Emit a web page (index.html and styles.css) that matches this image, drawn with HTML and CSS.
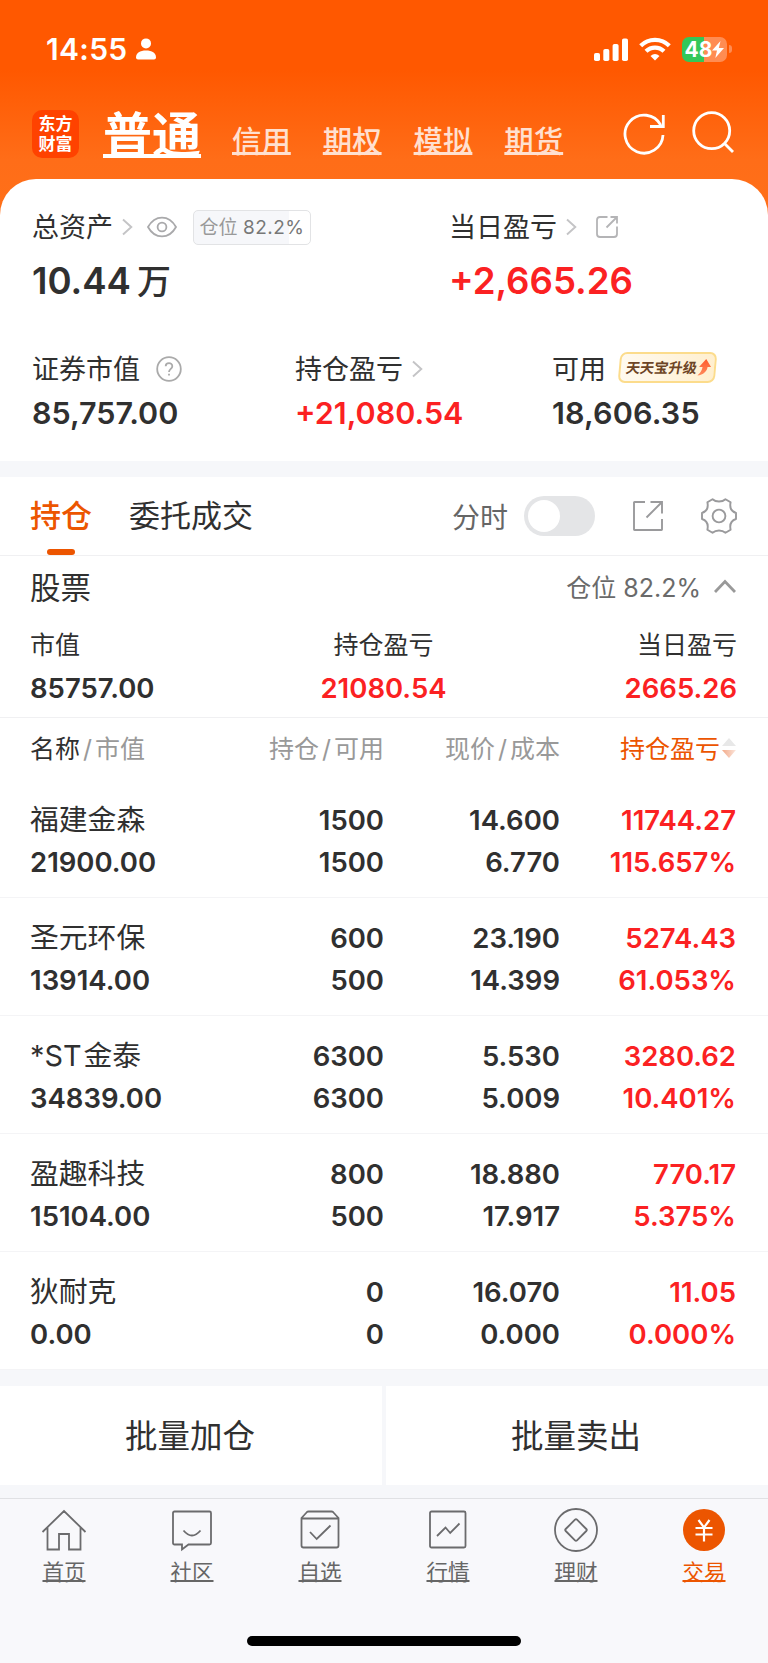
FILE: index.html
```html
<!DOCTYPE html>
<html lang="zh-CN">
<head>
    <meta charset="UTF-8">
    <meta name="viewport" content="width=device-width, initial-scale=1.0">
    <title>交易</title>
    <link rel="stylesheet" href="styles.css">
</head>
<body>
<div id="app">
    <header class="header">
        <div class="status">
            <span class="time">14:55</span>
            <svg class="person" width="20" height="22" viewBox="0 0 20 22" fill="#fff">
                <circle cx="10" cy="5.4" r="5"/>
                <path d="M0 19.5C0 15 4 12.6 10 12.6S20 15 20 19.5Q20 21.5 18 21.5H2Q0 21.5 0 19.5Z"/>
            </svg>
            <svg class="signal" width="34" height="23" viewBox="0 0 34 23" fill="#fff">
                <rect x="0" y="15" width="6" height="8" rx="1.8"/>
                <rect x="9.3" y="11" width="6" height="12" rx="1.8"/>
                <rect x="18.6" y="6" width="6" height="17" rx="1.8"/>
                <rect x="28" y="0.5" width="6" height="22.5" rx="1.8"/>
            </svg>
            <svg class="wifi" width="32" height="24" viewBox="0 0 32 24" fill="none" stroke="#fff" stroke-width="4.2">
                <path d="M1.7 8.8C9.5 .8 22.5 .8 30.3 8.8"/>
                <path d="M7 14.3C12 9.3 20 9.3 25 14.3"/>
                <path d="M16 23.5L11.5 19Q16 15 20.5 19Z" fill="#fff" stroke="none"/>
            </svg>
            <div class="battery">
                <span class="battery-num">48</span>
                <svg width="12" height="17" viewBox="0 0 12 17" fill="#fff">
                    <path d="M8.5 0L0 9.6H5L3.3 17L12 7H6.8Z"/>
                </svg>
            </div>
            <i class="battery-cap"></i>
        </div>
        <nav class="nav">
            <div class="logo"><span>东方</span><span>财富</span></div>
            <a class="nav-item active">普通</a>
            <a class="nav-item">信用</a>
            <a class="nav-item">期权</a>
            <a class="nav-item">模拟</a>
            <a class="nav-item">期货</a>
            <svg class="refresh" width="42" height="44" viewBox="0 0 42 44" fill="none" stroke="#fff" stroke-width="2.8">
                <path d="M40 23A19 19 0 1 1 37.8 13.2"/>
                <path d="M40.3 3V14.5H27"/>
            </svg>
            <svg class="search" width="42" height="44" viewBox="0 0 42 44" fill="none" stroke="#fff" stroke-width="2.8">
                <circle cx="19.7" cy="19.7" r="18"/>
                <path d="M32.5 32.5L41 41"/>
            </svg>
        </nav>
    </header>

    <section class="summary">
        <div class="row row-top">
            <div class="cell">
                <div class="label">
                    <span class="txt">总资产</span>
                    <svg class="arrow" width="11" height="18" viewBox="0 0 11 18"><path d="M1 1.5L9.3 9L1 16.5"/></svg>
                    <svg class="eye" width="30" height="22" viewBox="0 0 30 22" fill="none" stroke="#a9a9ab" stroke-width="1.8">
                        <path d="M1 11C8-1.6 22-1.6 29 11C22 23.6 8 23.6 1 11Z"/>
                        <circle cx="15" cy="11" r="4.4"/>
                    </svg>
                    <span class="ratio">仓位 <b>82.2%</b></span>
                </div>
                <div class="big">10.44<span class="wan">万</span></div>
            </div>
            <div class="cell">
                <div class="label">
                    <span class="txt">当日盈亏</span>
                    <svg class="arrow" width="11" height="18" viewBox="0 0 11 18"><path d="M1 1.5L9.3 9L1 16.5"/></svg>
                    <svg class="share-sm" width="22" height="22" viewBox="0 0 22 22" fill="none" stroke="#b4b4b6" stroke-width="1.8">
                        <path d="M11.5 1H4Q1 1 1 4V18Q1 21 4 21H18Q21 21 21 18V10.5"/>
                        <path d="M10.5 11.5L20.5 1.5M14.5 1H21V7.5"/>
                    </svg>
                </div>
                <div class="big red">+2,665.26</div>
            </div>
        </div>
        <div class="row row-sub">
            <div class="cell">
                <div class="label">
                    <span class="txt">证券市值</span>
                    <svg class="help" width="26" height="26" viewBox="0 0 26 26" fill="none" stroke="#aaa" stroke-width="1.8">
                        <circle cx="13" cy="13" r="11.8"/>
                        <path d="M9.7 10.3C9.7 6 16.3 6 16.3 10.2C16.3 12.8 13 12.9 13 16"/>
                        <path d="M13 17.7V19.6"/>
                    </svg>
                </div>
                <div class="mid">85,757.00</div>
            </div>
            <div class="cell">
                <div class="label">
                    <span class="txt">持仓盈亏</span>
                    <svg class="arrow" width="11" height="18" viewBox="0 0 11 18"><path d="M1 1.5L9.3 9L1 16.5"/></svg>
                </div>
                <div class="mid red">+21,080.54</div>
            </div>
            <div class="cell">
                <div class="label">
                    <span class="txt">可用</span>
                    <span class="promo">
                        <em>天天宝升级</em>
                        <svg width="13" height="17" viewBox="0 0 13 17">
                            <defs>
                                <linearGradient id="up" x1="0" y1="0" x2="0" y2="1">
                                    <stop offset="0" stop-color="#ff5a2c"/>
                                    <stop offset="1" stop-color="#ff8a5c"/>
                                </linearGradient>
                            </defs>
                            <path fill="url(#up)" d="M7.5 0L13 8H9.5C9.5 12 6 16 0 16.5C3 14 4.3 11 4.5 8H1Z"/>
                        </svg>
                    </span>
                </div>
                <div class="mid avail">18,606.35</div>
            </div>
        </div>
    </section>

    <section class="tabs">
        <span class="tab on">持仓</span>
        <span class="tab">委托成交</span>
        <span class="fenshi">分时</span>
        <span class="switch"></span>
        <svg class="share" width="32" height="32" viewBox="0 0 32 32" fill="none" stroke="#9a9a9c" stroke-width="1.9">
            <path d="M13 2H2.5Q2 2 2 2.5V29.5Q2 30 2.5 30H29.5Q30 30 30 29.5V19"/>
            <path d="M14.5 17.5L29.5 2.5M18.5 2H30V13.5"/>
        </svg>
        <svg class="gear" width="36" height="36" viewBox="0 0 36 36" fill="none" stroke="#9a9a9c" stroke-width="1.9" stroke-linejoin="round">
            <path d="M11.5 1.2C15 4.3 21 4.3 24.5 1.2L29.6 4.3C28.4 10 30 13.4 35 15V21C30 22.6 28.4 26 29.6 31.7L24.5 34.8C21 31.7 15 31.7 11.5 34.8L6.4 31.7C7.6 26 6 22.6 1 21V15C6 13.4 7.6 10 6.4 4.3Z"/>
            <circle cx="18" cy="18" r="6.4"/>
        </svg>
    </section>

    <section class="stock">
        <div class="stock-title">
            <span class="name">股票</span>
            <span class="pos">仓位 82.2%</span>
            <svg width="22" height="14" viewBox="0 0 22 14" fill="none" stroke="#999" stroke-width="2.8"><path d="M1 13L11 2.5L21 13"/></svg>
        </div>
        <div class="stock-sum">
            <div><p>市值</p><strong>85757.00</strong></div>
            <div><p>持仓盈亏</p><strong class="red">21080.54</strong></div>
            <div><p>当日盈亏</p><strong class="red">2665.26</strong></div>
        </div>
    </section>

    <section class="list">
        <div class="list-head">
            <span><b>名称</b><i>/</i>市值</span>
            <span>持仓<i>/</i>可用</span>
            <span>现价<i>/</i>成本</span>
            <span class="sort">持仓盈亏<svg width="16" height="22" viewBox="0 0 16 22">
                <defs>
                    <linearGradient id="fade" x1="0" x2="1" y1="0" y2="0">
                        <stop offset="0" stop-color="#f3a988"/>
                        <stop offset="1" stop-color="#fbe6dc"/>
                    </linearGradient>
                </defs>
                <path d="M8 1L15 9H1Z" fill="#e8e8e8"/>
                <path d="M8 21L15 13H1Z" fill="url(#fade)"/>
            </svg></span>
        </div>
        <ul>
            <li>
                <div><span class="name">福建金森</span><span>21900.00</span></div>
                <div><span>1500</span><span>1500</span></div>
                <div><span>14.600</span><span>6.770</span></div>
                <div class="red"><span>11744.27</span><span>115.657%</span></div>
            </li>
            <li>
                <div><span class="name">圣元环保</span><span>13914.00</span></div>
                <div><span>600</span><span>500</span></div>
                <div><span>23.190</span><span>14.399</span></div>
                <div class="red"><span>5274.43</span><span>61.053%</span></div>
            </li>
            <li>
                <div><span class="name">*ST<i class="thin"></i>金泰</span><span>34839.00</span></div>
                <div><span>6300</span><span>6300</span></div>
                <div><span>5.530</span><span>5.009</span></div>
                <div class="red"><span>3280.62</span><span>10.401%</span></div>
            </li>
            <li>
                <div><span class="name">盈趣科技</span><span>15104.00</span></div>
                <div><span>800</span><span>500</span></div>
                <div><span>18.880</span><span>17.917</span></div>
                <div class="red"><span>770.17</span><span>5.375%</span></div>
            </li>
            <li>
                <div><span class="name">狄耐克</span><span>0.00</span></div>
                <div><span>0</span><span>0</span></div>
                <div><span>16.070</span><span>0.000</span></div>
                <div class="red"><span>11.05</span><span>0.000%</span></div>
            </li>
        </ul>
    </section>

    <section class="batch">
        <div>批量加仓</div>
        <div>批量卖出</div>
    </section>

    <footer class="footer">
        <div class="menu">
            <a>
                <svg width="46" height="46" viewBox="0 0 46 46">
                    <path d="M1.5 25L23 4L44.5 25M6.5 20.5V42.5H18V27H28V42.5H39.5V20.5"/>
                </svg>
                <span>首页</span>
            </a>
            <a>
                <svg width="46" height="46" viewBox="0 0 46 46">
                    <path d="M5.5 4.5H40.5Q42 4.5 42 6V36Q42 37.5 40.5 37.5H19.5L13 42.5V37.5H5.5Q4 37.5 4 36V6Q4 4.5 5.5 4.5Z"/>
                    <path d="M14.5 23.5Q23 33.5 31.5 23.5"/>
                </svg>
                <span>社区</span>
            </a>
            <a>
                <svg width="46" height="46" viewBox="0 0 46 46">
                    <path d="M4.5 11L10 5Q10.5 4.5 11.5 4.5H34.5Q35.5 4.5 36 5L41.5 11V38.5Q41.5 40.5 39.5 40.5H6.5Q4.5 40.5 4.5 38.5ZM4.5 11.5H41.5"/>
                    <path d="M13 25L19.7 32L33.5 18.5"/>
                </svg>
                <span>自选</span>
            </a>
            <a>
                <svg width="46" height="46" viewBox="0 0 46 46">
                    <rect x="5" y="4.5" width="35.5" height="36" rx="1.5"/>
                    <path d="M12 29L20.5 20.5L25.2 26L34.5 16.5"/>
                </svg>
                <span>行情</span>
            </a>
            <a>
                <svg width="46" height="46" viewBox="0 0 46 46">
                    <circle cx="23" cy="23" r="21"/>
                    <path d="M22 12.7Q23 11.7 24 12.7L33.3 22Q34.3 23 33.3 24L24 33.3Q23 34.3 22 33.3L12.7 24Q11.7 23 12.7 22Z"/>
                </svg>
                <span>理财</span>
            </a>
            <a class="current">
                <svg width="46" height="46" viewBox="0 0 46 46">
                    <circle class="disc" cx="23" cy="23" r="21"/>
                    <path class="yen" d="M17.5 13L23 20.5L28.5 13M23 20.5V34.5M14.5 21H31.5M14.5 27.5H31.5"/>
                </svg>
                <span>交易</span>
            </a>
        </div>
        <div class="home-bar"></div>
    </footer>
</div>
</body>
</html>
```
FILE: styles.css
```css
* {
    margin: 0;
    padding: 0;
    box-sizing: border-box;
}

ul {
    list-style: none;
}

i, em {
    font-style: normal;
}

body {
    width: 768px;
    background: #fff;
    color: #303030;
    font-family: Inter, "Noto Sans CJK SC", sans-serif;
}

svg {
    display: block;
    flex-shrink: 0;
}

#app {
    height: 1663px;
    overflow: hidden;
    display: flex;
    flex-direction: column;
}

.red {
    color: #fb2122;
}

/* 顶部 */
.header {
    height: 219px;
    flex-shrink: 0;
    background: linear-gradient(#ff5800 0, #ff5800 70px, #ff6d18 160px, #ff7019 219px);
    color: #fff;
}

.status {
    height: 98px;
    padding: 0 36px 0 46px;
    display: flex;
    align-items: center;
}

.status .time {
    font-size: 30px;
    font-weight: 600;
    letter-spacing: 0.3px;
}

.status .person {
    margin-left: 9px;
    margin-right: auto;
}

.status .wifi {
    margin: 0 11px;
}

.battery {
    width: 45px;
    height: 25px;
    border-radius: 7px;
    background: linear-gradient(90deg, #34c759 22px, #ff8c52 22px);
    display: flex;
    align-items: center;
    justify-content: center;
}

.battery-num {
    font-size: 21px;
    font-weight: 700;
    line-height: 25px;
}

.battery-cap {
    width: 3px;
    height: 8px;
    margin-left: 2px;
    border-radius: 0 3px 3px 0;
    background: #ff8c52;
}

.nav {
    height: 81px;
    padding: 0 34px 0 32px;
    display: flex;
    align-items: flex-start;
}

.logo {
    width: 47px;
    height: 48px;
    margin: 12px 24px 0 0;
    padding-top: 4px;
    border-radius: 10px;
    background: #ff4200;
    text-align: center;
}

.logo span {
    display: block;
    font-size: 17px;
    font-weight: 700;
    line-height: 20px;
}

.nav-item {
    margin: 24px 32px 0 0;
    color: #ffe0d0;
    font-size: 29.4px;
    font-weight: 500;
    line-height: 40px;
    text-decoration: underline;
    text-decoration-thickness: 2.5px;
    text-decoration-skip-ink: none;
    text-underline-offset: 0;
}

.nav-item.active {
    margin: 8px 31px 0 0;
    color: #fff;
    font-size: 49px;
    font-weight: 700;
    line-height: 60px;
    text-decoration-thickness: 4px;
    text-underline-offset: 1px;
}

.refresh {
    margin: 14px 0 0 auto;
}

.search {
    margin: 13px 0 0 27px;
}

/* 资产 */
.summary {
    position: relative;
    height: 282px;
    margin-top: -40px;
    padding: 24px 32px 0;
    flex-shrink: 0;
    border-radius: 36px 36px 0 0;
    background: #fff;
}

.row {
    display: grid;
}

.row-top {
    grid-template-columns: 417px 1fr;
    height: 142px;
}

.row-sub {
    grid-template-columns: 263px 257px 1fr;
}

.label {
    height: 48px;
    display: flex;
    align-items: center;
    font-size: 27px;
    white-space: nowrap;
}

.txt {
    padding-bottom: 4px;
}

.arrow {
    margin-left: 9px;
    fill: none;
    stroke: #c4c4c6;
    stroke-width: 1.9;
}

.eye {
    margin-left: 14px;
}

.share-sm {
    margin-left: 19px;
}

.help {
    margin-left: 16px;
}

.ratio {
    width: 118px;
    height: 35px;
    margin-left: 16px;
    border: 1px solid #e2e3e5;
    border-radius: 5px;
    background: linear-gradient(90deg, #f6f7fa 82.2%, #fff 82.2%);
    color: #999;
    font-size: 19px;
    line-height: 33px;
    text-align: center;
}

.ratio b {
    color: #777;
    font-weight: 400;
    letter-spacing: 0.5px;
}

.big {
    font-size: 36.6px;
    font-weight: 600;
    line-height: 61px;
}

.wan {
    margin-left: 6px;
    font-size: 34px;
    font-weight: 500;
}

.mid {
    font-size: 30.5px;
    font-weight: 600;
    line-height: 40px;
}

.avail {
    letter-spacing: 0.15px;
}

.promo {
    width: 97px;
    height: 31px;
    margin: -4px 0 0 13px;
    padding-left: 2px;
    border: 2px solid #fcdc8c;
    border-radius: 7px;
    background: linear-gradient(90deg, #fffaf0, #ffefcf);
    display: flex;
    align-items: center;
    justify-content: center;
    transform: skewX(-5deg);
}

.promo em {
    margin-right: 2px;
    color: #6d4526;
    font-size: 14.2px;
    font-weight: 700;
    line-height: 27px;
    transform: skewX(-4deg);
}

/* 标签栏 */
.tabs {
    height: 95px;
    padding: 0 31px 0 30px;
    flex-shrink: 0;
    border-top: 16px solid #f6f7fa;
    border-bottom: 1px solid #f0f0f2;
    display: flex;
    align-items: center;
}

.tab {
    position: relative;
    margin-right: 37px;
    font-size: 31px;
    line-height: 78px;
}

.tab.on {
    color: #ec5500;
    font-weight: 500;
}

.tab.on::after {
    content: "";
    position: absolute;
    left: 17px;
    bottom: 0;
    width: 28px;
    height: 6px;
    border-radius: 3px;
    background: #ec5500;
}

.fenshi {
    margin-left: auto;
    color: #666;
    font-size: 28px;
}

.switch {
    width: 71px;
    height: 40px;
    margin: 0 38px 0 16px;
    padding: 4px;
    border-radius: 20px;
    background: #e4e5e7;
}

.switch::after {
    content: "";
    display: block;
    width: 32px;
    height: 32px;
    border-radius: 50%;
    background: #fff;
}

.share {
    margin-left: -1px;
}

.gear {
    margin-left: 37px;
}

/* 股票汇总 */
.stock {
    height: 162px;
    padding: 0 31px 0 30px;
    flex-shrink: 0;
    border-bottom: 1px solid #f0f0f2;
}

.stock-title {
    height: 64px;
    padding: 0 1px 4px 0;
    display: flex;
    align-items: center;
    font-size: 30.5px;
}

.stock-title .name {
    padding-bottom: 1px;
}

.stock-title .pos {
    margin: 0 13px 0 auto;
    color: #6a6a6a;
    font-size: 25px;
}

.stock-sum {
    display: grid;
    grid-template-columns: repeat(3, 1fr);
    text-align: center;
}

.stock-sum div:first-child {
    text-align: left;
}

.stock-sum div:last-child {
    text-align: right;
}

.stock-sum p {
    font-size: 25px;
    line-height: 51px;
}

.stock-sum strong {
    display: block;
    font-size: 27.5px;
    font-weight: 600;
    line-height: 35px;
}

/* 持仓列表 */
.list {
    flex-shrink: 0;
}

.list-head, .list li {
    padding: 0 32px 0 30px;
    display: grid;
    grid-template-columns: 181px 173px 176px 1fr;
    text-align: right;
}

.list-head > :first-child, .list li > :first-child {
    text-align: left;
}

.list-head {
    height: 62px;
    padding-bottom: 5px;
    align-items: center;
    color: #999;
    font-size: 25px;
    white-space: nowrap;
}

.list-head b {
    color: #303030;
    font-weight: 400;
}

.list-head i {
    margin: 0 3px;
}

.list-head .sort {
    color: #ec5500;
    display: flex;
    align-items: center;
    justify-content: flex-end;
}

.sort svg {
    margin: 3px -1px 0 1px;
}

.list li {
    height: 118px;
    padding-top: 19px;
    border-bottom: 1px solid #f4f4f6;
}

.list li span {
    display: block;
    height: 42px;
    font-size: 27.5px;
    font-weight: 600;
    line-height: 42px;
}

.list li .name {
    font-size: 28.8px;
    font-weight: 400;
}

.thin {
    margin-left: 2px;
}

/* 批量操作 */
.batch {
    height: 128px;
    padding: 16px 0 13px;
    flex-shrink: 0;
    background: #f6f7fa;
    display: grid;
    grid-template-columns: 382px 382px;
    gap: 4px;
}

.batch div {
    padding: 3px 2px 0 0;
    background: #fff;
    font-size: 32.5px;
    line-height: 96px;
    text-align: center;
}

/* 底部菜单 */
.footer {
    flex: 1;
    border-top: 1px solid #e0e1e4;
    background: #f8f8fb;
}

.menu {
    height: 137px;
    padding-top: 8px;
    display: grid;
    grid-template-columns: repeat(6, 1fr);
}

.menu a {
    display: flex;
    flex-direction: column;
    align-items: center;
    color: #666;
    font-size: 21.5px;
    line-height: 38px;
    text-decoration: underline;
    text-decoration-thickness: 1.5px;
    text-decoration-skip-ink: none;
    text-underline-offset: 0;
}

.menu svg {
    fill: none;
    stroke: #6b6b6d;
    stroke-width: 1.8;
}

.menu .current {
    color: #ec5500;
}

.menu .disc {
    fill: #ec5500;
    stroke: none;
}

.menu .yen {
    stroke: #fff;
    stroke-width: 2.2;
}

.home-bar {
    width: 274px;
    height: 10px;
    margin: 0 auto;
    border-radius: 5px;
    background: #000;
}
```
